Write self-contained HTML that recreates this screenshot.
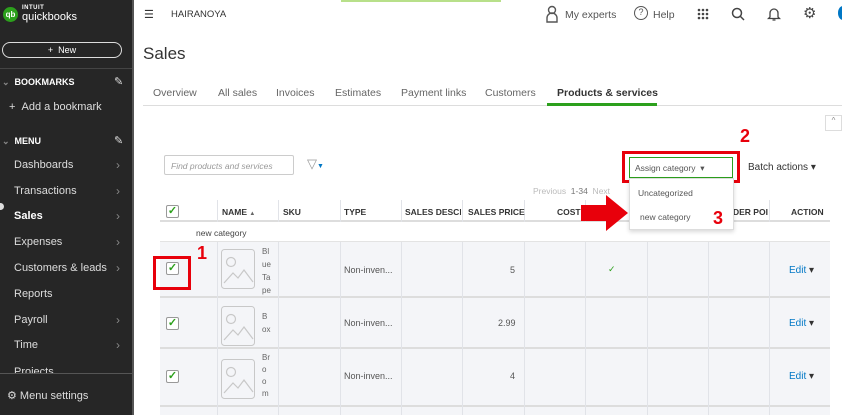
<!DOCTYPE html>
<html><head><style>
*{box-sizing:border-box;margin:0;padding:0}
body{width:842px;height:415px;overflow:hidden;font-family:"Liberation Sans",sans-serif;background:#fff;position:relative}
.a{position:absolute}
.sb{left:0;top:0;width:132px;height:415px;background:#262626;color:#ddd;font-size:11px}
.sb .it{position:absolute;left:14px;color:#ddd}
.sb .ch{position:absolute;left:116px;color:#888;font-size:12px}
.t{font-size:10px;color:#555}
.hd{font-size:8.5px;font-weight:bold;color:#333}
.vl{position:absolute;width:1px;background:#e1e3e8}
.cb{position:absolute;width:13px;height:13px;border:1px solid #999;background:#fff;border-radius:2px;color:#2ca01c;font-size:11px;line-height:11px;text-align:center;font-weight:bold}
.red{position:absolute;border:3px solid #e8000b}
.rn{position:absolute;color:#e8000b;font-weight:bold;font-size:18px}
.img{position:absolute;width:34px;height:40px}
.edit{position:absolute;left:789px;color:#0077c5;font-size:10px}
.edit:after{content:" ▾";color:#333}
</style></head><body>
<div class="a sb">
 <div class="a" style="left:3px;top:7px;width:15px;height:15px;border-radius:50%;background:#2ca01c;color:#fff;font-size:8px;font-weight:bold;text-align:center;line-height:15px">qb</div>
 <div class="a" style="left:22px;top:5px;font-size:6px;color:#fff;font-weight:bold;letter-spacing:.5px">INTUIT</div>
 <div class="a" style="left:22px;top:11px;font-size:11px;color:#fff">quickbooks</div>
 <div class="a" style="left:2px;top:42px;width:120px;height:16px;border:1px solid #ddd;border-radius:9px;text-align:center;font-size:9px;color:#fff;line-height:14px">+ &nbsp;New</div>
 <div class="a" style="left:0;top:68px;width:132px;height:1px;background:#444"></div>
 <div class="a" style="left:2px;top:77px;font-size:9px;color:#fff;font-weight:bold"><span style="color:#888">⌄</span> &nbsp;BOOKMARKS</div>
 <div class="a" style="left:114px;top:75px;color:#ddd;font-size:11px">✎</div>
 <div class="it" style="left:9px;top:101px;font-size:11px">+ &nbsp;Add a bookmark</div>
 <div class="a" style="left:2px;top:136px;font-size:9px;color:#fff;font-weight:bold"><span style="color:#888">⌄</span> &nbsp;MENU</div>
 <div class="a" style="left:114px;top:134px;color:#ddd;font-size:11px">✎</div>
 <div class="it" style="top:159px">Dashboards</div><div class="ch" style="top:158px">›</div>
 <div class="it" style="top:185px">Transactions</div><div class="ch" style="top:184px">›</div>
 <div class="it" style="top:210px;color:#fff;font-weight:bold">Sales</div><div class="ch" style="top:209px">›</div>
 <div class="a" style="left:-3px;top:203px;width:7px;height:7px;border-radius:50%;background:#ddd"></div>
 <div class="it" style="top:236px">Expenses</div><div class="ch" style="top:235px">›</div>
 <div class="it" style="top:262px">Customers &amp; leads</div><div class="ch" style="top:261px">›</div>
 <div class="it" style="top:288px">Reports</div>
 <div class="it" style="top:314px">Payroll</div><div class="ch" style="top:313px">›</div>
 <div class="it" style="top:339px">Time</div><div class="ch" style="top:338px">›</div>
 <div class="it" style="top:366px;height:8px;overflow:hidden">Projects</div>
 <div class="a" style="left:0;top:373px;width:132px;height:1px;background:#555"></div>
 <div class="it" style="left:7px;top:389px">⚙ Menu settings</div>
</div>
<div class="a" style="left:132px;top:0;width:2px;height:415px;background:#555"></div>
<div class="a" style="left:341px;top:0;width:160px;height:2px;background:#b8e08a"></div>
<div class="a" style="left:144px;top:8px;font-size:11px;color:#333">☰</div>
<div class="a" style="left:171px;top:9px;font-size:9.5px;color:#333">HAIRANOYA</div>
<svg class="a" style="left:545px;top:5px" width="14" height="18"><circle cx="7" cy="5" r="3.5" fill="none" stroke="#555" stroke-width="1.4"/><path d="M2 17v-4a5 5 0 0 1 10 0v4z" fill="none" stroke="#555" stroke-width="1.4"/></svg>
<div class="a" style="left:565px;top:9px;font-size:10.5px;color:#555">My experts</div>
<div class="a" style="left:634px;top:6px;width:14px;height:14px;border:1.5px solid #555;border-radius:50%;font-size:9px;text-align:center;line-height:11px;color:#555">?</div>
<div class="a" style="left:653px;top:9px;font-size:10.5px;color:#555">Help</div>
<svg class="a" style="left:697px;top:8px" width="12" height="12" fill="#444"><circle cx="2" cy="2" r="1.3"/><circle cx="6" cy="2" r="1.3"/><circle cx="10" cy="2" r="1.3"/><circle cx="2" cy="6" r="1.3"/><circle cx="6" cy="6" r="1.3"/><circle cx="10" cy="6" r="1.3"/><circle cx="2" cy="10" r="1.3"/><circle cx="6" cy="10" r="1.3"/><circle cx="10" cy="10" r="1.3"/></svg>
<svg class="a" style="left:731px;top:7px" width="14" height="14"><circle cx="6" cy="6" r="4.5" fill="none" stroke="#444" stroke-width="1.5"/><line x1="9" y1="9" x2="13" y2="13" stroke="#444" stroke-width="1.5"/></svg>
<svg class="a" style="left:767px;top:6px" width="14" height="16"><path d="M3 11V7a4 4 0 0 1 8 0v4l1.5 1.5h-11z M5.5 14h3" fill="none" stroke="#444" stroke-width="1.3"/></svg>
<div class="a" style="left:803px;top:4px;font-size:15px;color:#444">⚙</div>
<div class="a" style="left:838px;top:6px;width:10px;height:14px;border-radius:50%;background:#0077c5"></div>
<div class="a" style="left:143px;top:44px;font-size:17px;color:#333">Sales</div>
<div class="a" style="left:153px;top:87px;font-size:10.5px;color:#666">Overview</div>
<div class="a" style="left:218px;top:87px;font-size:10.5px;color:#666">All sales</div>
<div class="a" style="left:276px;top:87px;font-size:10.5px;color:#666">Invoices</div>
<div class="a" style="left:335px;top:87px;font-size:10.5px;color:#666">Estimates</div>
<div class="a" style="left:401px;top:87px;font-size:10.5px;color:#666">Payment links</div>
<div class="a" style="left:485px;top:87px;font-size:10.5px;color:#666">Customers</div>
<div class="a" style="left:557px;top:87px;font-size:10.5px;color:#333;font-weight:bold">Products &amp; services</div>
<div class="a" style="left:143px;top:105px;width:699px;height:1px;background:#ddd"></div>
<div class="a" style="left:547px;top:103px;width:110px;height:3px;background:#2ca01c"></div>
<div class="a" style="left:825px;top:115px;width:17px;height:16px;border:1px solid #ddd;font-size:8px;color:#888;text-align:center">^</div>

<div class="a" style="left:164px;top:155px;width:130px;height:20px;border:1px solid #ccc;border-radius:2px;font-size:8.5px;color:#999;font-style:italic;padding:5px 6px">Find products and services</div>
<div class="a" style="left:307px;top:156px;font-size:13px;color:#999">▽<span style="font-size:7px;color:#0077c5">▼</span></div>
<div class="a" style="left:629px;top:157px;width:104px;height:21px;border:1px solid #2ca01c;font-size:8.5px;color:#555;padding:5px 5px">Assign category &nbsp;▾</div>
<div class="red" style="left:622px;top:151px;width:118px;height:32px"></div>
<div class="rn" style="left:740px;top:126px">2</div>
<div class="a" style="left:748px;top:162px;font-size:10px;color:#333">Batch actions ▾</div>
<div class="a" style="left:533px;top:186px;font-size:8.5px;color:#bbb">Previous <span style="color:#777">&nbsp;1-34 </span>&nbsp;Next</div>

<div class="a" style="left:160px;top:200px;width:670px;height:22px;background:#fff;border-bottom:2px solid #ddd"></div>
<div class="a" style="left:160px;top:222px;width:670px;height:20px;background:#fff;border-bottom:1px solid #e3e3e3"></div>
<div class="a" style="left:160px;top:242px;width:670px;height:173px;background:#f4f5f8"></div>
<div class="a" style="left:160px;top:296px;width:670px;height:2px;background:#ddd"></div>
<div class="a" style="left:160px;top:347px;width:670px;height:2px;background:#ddd"></div>
<div class="a" style="left:160px;top:405px;width:670px;height:2px;background:#ddd"></div>
<div class="vl" style="left:217px;top:200px;height:22px"></div>
<div class="vl" style="left:217px;top:242px;height:173px"></div>
<div class="vl" style="left:278px;top:200px;height:22px"></div><div class="vl" style="left:278px;top:242px;height:173px"></div>
<div class="vl" style="left:340px;top:200px;height:22px"></div><div class="vl" style="left:340px;top:242px;height:173px"></div>
<div class="vl" style="left:401px;top:200px;height:22px"></div><div class="vl" style="left:401px;top:242px;height:173px"></div>
<div class="vl" style="left:462px;top:200px;height:22px"></div><div class="vl" style="left:462px;top:242px;height:173px"></div>
<div class="vl" style="left:524px;top:200px;height:22px"></div><div class="vl" style="left:524px;top:242px;height:173px"></div>
<div class="vl" style="left:585px;top:200px;height:22px"></div><div class="vl" style="left:585px;top:242px;height:173px"></div>
<div class="vl" style="left:647px;top:242px;height:173px"></div>
<div class="vl" style="left:708px;top:242px;height:173px"></div>
<div class="vl" style="left:769px;top:200px;height:22px"></div><div class="vl" style="left:769px;top:242px;height:173px"></div>
<div class="cb" style="left:166px;top:205px">✓</div>
<div class="a hd" style="left:222px;top:207px">NAME <span style="font-size:6px;color:#666">▲</span></div>
<div class="a hd" style="left:283px;top:207px">SKU</div>
<div class="a hd" style="left:344px;top:207px">TYPE</div>
<div class="a hd" style="left:405px;top:207px;width:56px;overflow:hidden;white-space:nowrap">SALES DESCRIPTION</div>
<div class="a hd" style="left:468px;top:207px">SALES PRICE</div>
<div class="a hd" style="left:557px;top:207px">COST</div>
<div class="a hd" style="left:733px;top:207px">DER POI</div>
<div class="a hd" style="left:791px;top:207px">ACTION</div>
<div class="a t" style="left:196px;top:228px;font-size:8.5px;color:#444">new category</div>

<svg width="0" height="0" style="position:absolute"><defs><symbol id="pic" viewBox="0 0 34 40"><rect x="0.5" y="0.5" width="33" height="39" rx="3" fill="#f4f5f8" stroke="#c8c8c8"/><circle cx="10" cy="13" r="4.5" fill="none" stroke="#c8c8c8" stroke-width="1.2"/><path d="M3 34l9-10 5 5 6-8 9 12" fill="none" stroke="#c8c8c8" stroke-width="1.2"/></symbol></defs></svg>

<div class="cb" style="left:166px;top:262px">✓</div>
<svg class="img" style="left:221px;top:249px"><use href="#pic"/></svg>
<div class="a t" style="left:262px;top:245px;font-size:8px;line-height:13px;color:#666">Bl<br>ue<br>Ta<br>pe</div>
<div class="a t" style="left:344px;top:265px;font-size:9px">Non-inven...</div>
<div class="a t" style="left:510px;top:265px;font-size:9px">5</div>
<div class="a" style="left:608px;top:264px;color:#2ca01c;font-size:9px">✓</div>
<div class="edit" style="top:265px">Edit</div>
<div class="red" style="left:153px;top:256px;width:38px;height:34px"></div>
<div class="rn" style="left:197px;top:243px">1</div>

<div class="cb" style="left:166px;top:317px">✓</div>
<svg class="img" style="left:221px;top:306px"><use href="#pic"/></svg>
<div class="a t" style="left:262px;top:310px;font-size:8px;line-height:13px;color:#666">B<br>ox</div>
<div class="a t" style="left:344px;top:318px;font-size:9px">Non-inven...</div>
<div class="a t" style="left:498px;top:318px;font-size:9px">2.99</div>
<div class="edit" style="top:318px">Edit</div>

<div class="cb" style="left:166px;top:370px">✓</div>
<svg class="img" style="left:221px;top:359px"><use href="#pic"/></svg>
<div class="a t" style="left:262px;top:352px;font-size:8px;line-height:12px;color:#666">Br<br>o<br>o<br>m</div>
<div class="a t" style="left:344px;top:371px;font-size:9px">Non-inven...</div>
<div class="a t" style="left:510px;top:371px;font-size:9px">4</div>
<div class="edit" style="top:371px">Edit</div>

<div class="a" style="left:629px;top:178px;width:105px;height:52px;background:#fff;border:1px solid #ddd;box-shadow:0 2px 4px rgba(0,0,0,.15)"></div>
<div class="a" style="left:638px;top:188px;font-size:8.5px;color:#555">Uncategorized</div>
<div class="a" style="left:640px;top:212px;font-size:8.5px;color:#555">new category</div>
<div class="rn" style="left:713px;top:208px">3</div>
<svg class="a" style="left:581px;top:195px" width="50" height="36"><polygon points="0,10 25,10 25,0 47,18 25,36 25,26 0,26" fill="#e8000b"/></svg>
</body></html>
